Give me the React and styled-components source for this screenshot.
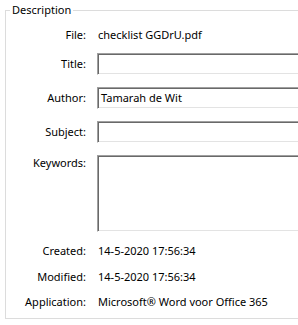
import React from "react";
import styled, { createGlobalStyle } from "styled-components";

const Global = createGlobalStyle`
  html, body { margin: 0; padding: 0; background: #ffffff; }
  body {
    font-family: "Noto Sans", "Open Sans", sans-serif;
    font-size: 11px; color: #000;
  }
`;

const Frame = styled.div`
  width: 298px;
  height: 325px;
  overflow: hidden;
  background: #fff;
`;

const Group = styled.fieldset`
  margin: 0 0 0 5px;
  padding: 0 0 8px 0;
  width: 340px;
  border: 1px solid #dcdcdc;
  box-sizing: border-box;
  min-width: 0;
`;

const Legend = styled.legend`
  margin-left: 4px;
  padding: 0 2px;
  line-height: 20px;
  height: 20px;
  font-size: 11px;
`;

const Row = styled.div`
  display: flex;
  align-items: ${(p) => (p.$top ? "flex-start" : "center")};
  margin-top: ${(p) => p.$mt}px;
`;

const Label = styled.div`
  width: 80px;
  flex: none;
  text-align: right;
  line-height: 16px;
  margin-right: 11px;
  white-space: nowrap;
`;

const Value = styled.div`
  line-height: 16px;
  padding-left: 1px;
  white-space: nowrap;
`;

const Box = styled.div`
  flex: 1;
  margin-right: 10px;
  height: ${(p) => p.$h || 22}px;
  box-sizing: border-box;
  border-style: solid;
  border-width: 1px;
  border-color: #a0a0a0 #ffffff #ffffff #a0a0a0;
  box-shadow: inset 1px 1px 0 #696969, inset -1px -1px 0 #e3e3e3;
  background: #fff;
  padding: 2px 0 0 3px;
  line-height: 16px;
  white-space: nowrap;
`;

export default function App() {
  return (
    <Frame>
      <Global />
      <Group>
        <Legend>Description</Legend>
        <Row $mt={7}>
          <Label>File:</Label>
          <Value>checklist GGDrU.pdf</Value>
        </Row>
        <Row $mt={10}>
          <Label>Title:</Label>
          <Box />
        </Row>
        <Row $mt={12}>
          <Label>Author:</Label>
          <Box>Tamarah de Wit</Box>
        </Row>
        <Row $mt={12}>
          <Label>Subject:</Label>
          <Box />
        </Row>
        <Row $mt={12} $top>
          <Label>Keywords:</Label>
          <Box $h={77} />
        </Row>
        <Row $mt={11}>
          <Label>Created:</Label>
          <Value>14-5-2020 17:56:34</Value>
        </Row>
        <Row $mt={10}>
          <Label>Modified:</Label>
          <Value>14-5-2020 17:56:34</Value>
        </Row>
        <Row $mt={9}>
          <Label>Application:</Label>
          <Value>Microsoft® Word voor Office 365</Value>
        </Row>
      </Group>
    </Frame>
  );
}
